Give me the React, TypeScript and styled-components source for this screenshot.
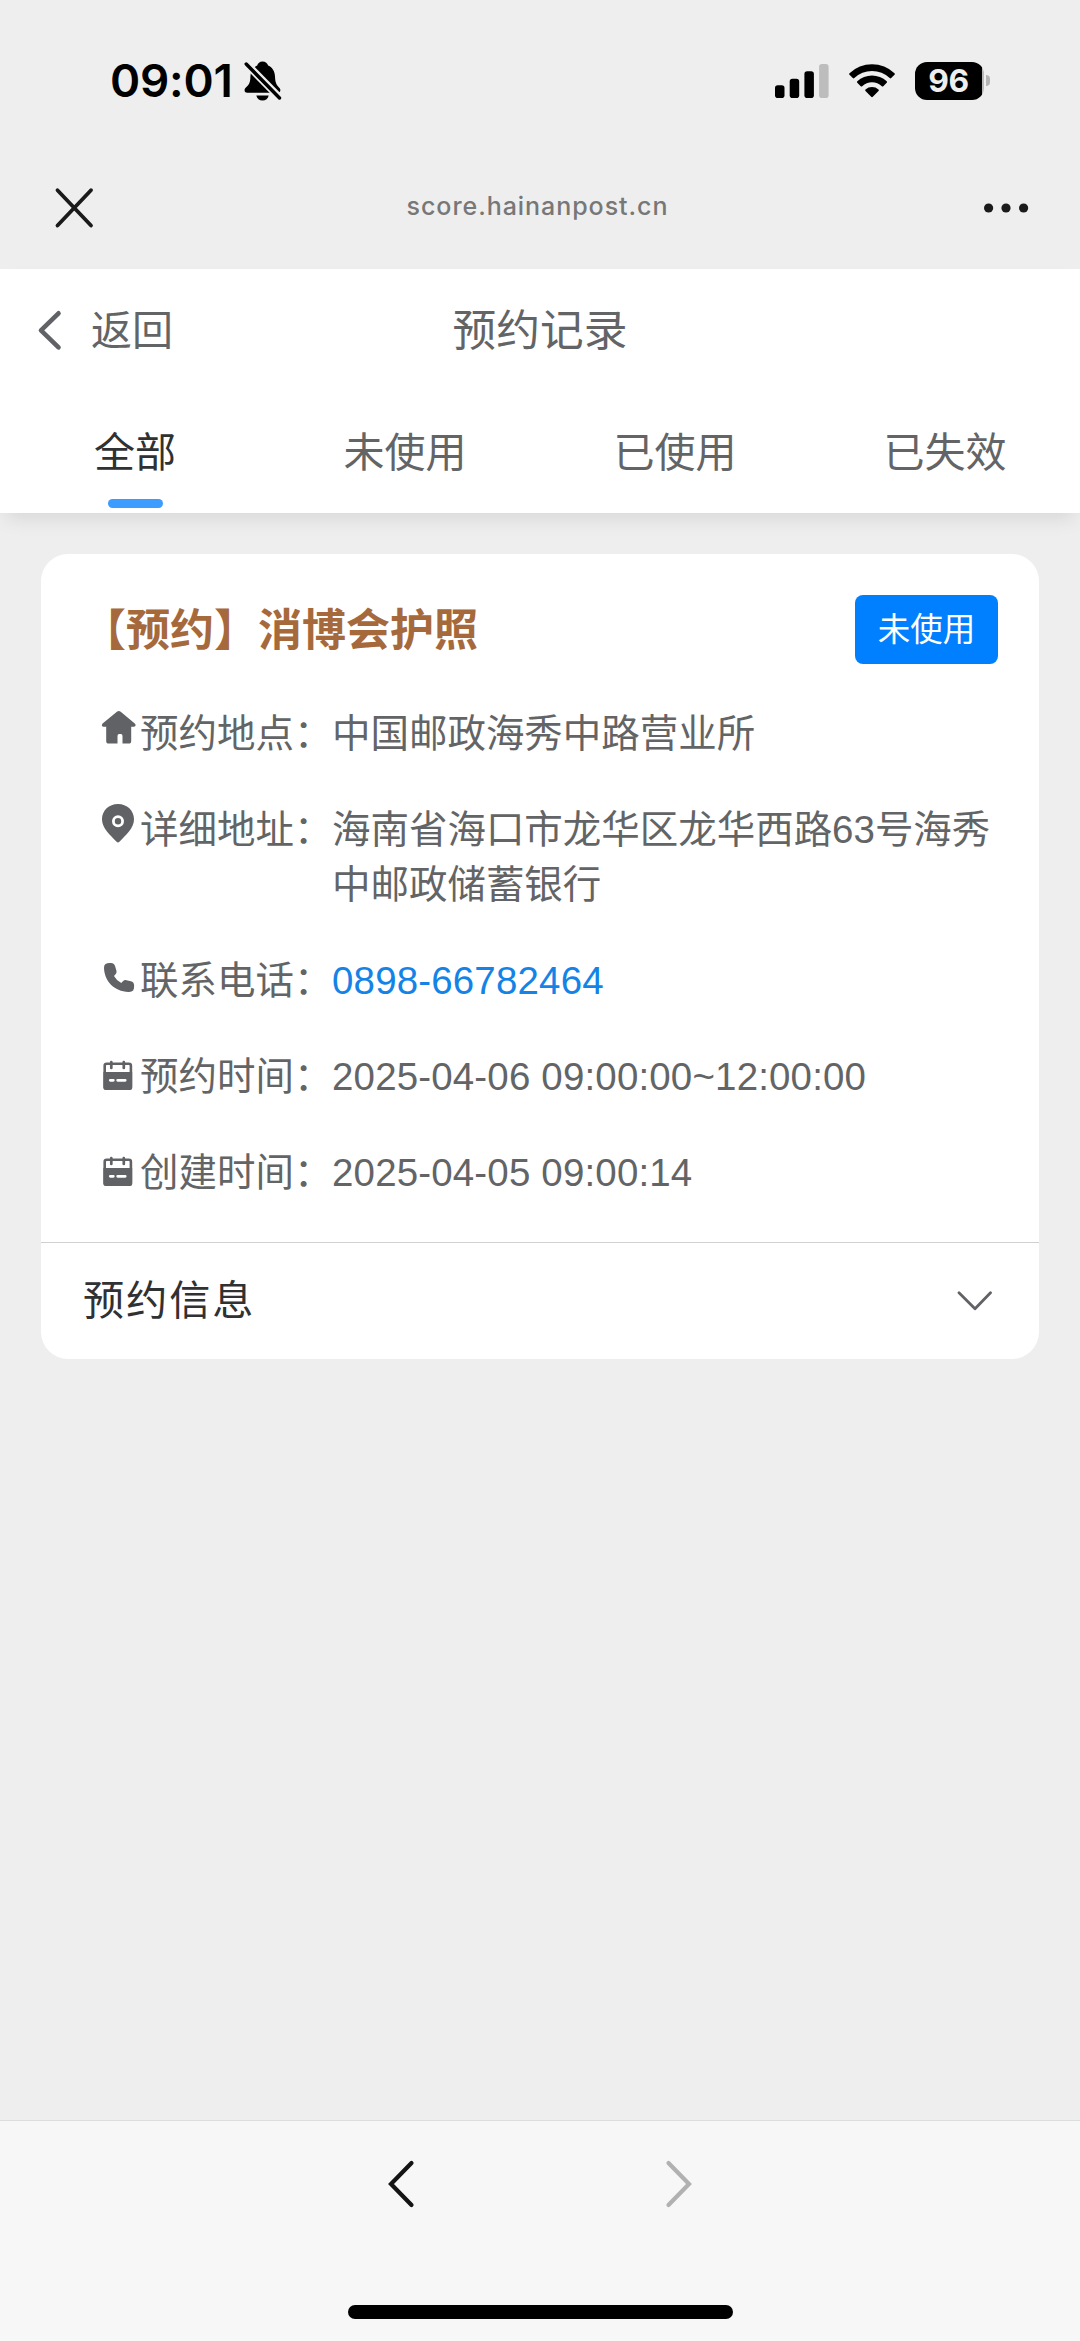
import React from "react";
import styled, { createGlobalStyle } from "styled-components";

const Global = createGlobalStyle`
  * { box-sizing: border-box; }
  body { margin: 0; background: #eeeeee; }
`;

const Screen = styled.div`
  width: 1080px;
  height: 2341px;
  display: flex;
  flex-direction: column;
  background: #eeeeee;
  color: #636466;
  font-family: "Liberation Sans", "Noto Sans CJK SC", sans-serif;
  overflow: hidden;
`;

const StatusBar = styled.div`
  height: 161px;
  flex: none;
  display: flex;
  justify-content: space-between;
  align-items: center;
  padding: 0 90px 0 110px;
  color: #000;
  font-family: Inter, sans-serif;
`;

const StatusGroup = styled.div<{ $gap: number }>`
  display: flex;
  align-items: center;
  gap: ${(p) => p.$gap}px;
`;

const Clock = styled.span`
  width: 124px;
  font-size: 45.8px;
  font-weight: 600;
  line-height: 50px;
  letter-spacing: -0.2px;
  white-space: nowrap;
`;

const Battery = styled.div`
  display: flex;
  align-items: center;
  gap: 2px;
`;

const BatteryBody = styled.div`
  width: 69px;
  height: 38px;
  border-radius: 12px;
  background: linear-gradient(90deg, #000 67px, #b9b9b9 67px);
  color: #eee;
  font-size: 31.8px;
  font-weight: 700;
  line-height: 38px;
  text-align: center;
  padding-right: 2px;
  letter-spacing: -0.5px;
`;

const BatteryTip = styled.div`
  width: 4px;
  height: 11px;
  border-radius: 0 4px 4px 0;
  background: #b4b4b4;
`;

const BrowserBar = styled.div`
  height: 108px;
  flex: none;
  display: grid;
  grid-template-columns: 1fr auto 1fr;
  align-items: center;
  padding: 0 50px 14px 53px;
`;

const Address = styled.span`
  color: #777;
  font-family: Inter, sans-serif;
  font-size: 25px;
  font-weight: 500;
  letter-spacing: 0.95px;
  line-height: 30px;
  margin: 0 8px 5px 0;
`;

const BarEnd = styled.div`
  display: flex;
  justify-content: flex-end;
`;

const Header = styled.header`
  height: 244px;
  flex: none;
  background: #fff;
  box-shadow: 0 10px 20px -6px rgba(0, 0, 0, 0.11);
`;

const NavBar = styled.div`
  height: 121px;
  display: grid;
  grid-template-columns: 1fr auto 1fr;
  align-items: center;
  padding: 0 36px;
`;

const BackButton = styled.div`
  display: flex;
  align-items: center;
  gap: 27px;
  font-size: 41px;
  line-height: 60px;
  padding-top: 2px;
`;

const NavTitle = styled.h1`
  margin: 0;
  padding-top: 3px;
  font-size: 43.7px;
  font-weight: 400;
  line-height: 60px;
`;

const Tabs = styled.div`
  height: 123px;
  display: grid;
  grid-template-columns: repeat(4, 1fr);
`;

const Tab = styled.div<{ $active?: boolean }>`
  display: flex;
  flex-direction: column;
  align-items: center;
  padding-top: 33px;
  gap: 16px;
  font-size: 41px;
  line-height: 60px;
  color: ${(p) => (p.$active ? "#303133" : "#636466")};
`;

const TabLine = styled.div`
  width: 55px;
  height: 9px;
  border-radius: 5px;
  background: #3c9cff;
`;

const Content = styled.main`
  flex: 1;
  padding: 41px;
`;

const Card = styled.section`
  height: 805px;
  border-radius: 27px;
  background: #fff;
  display: flex;
  flex-direction: column;
`;

const CardHead = styled.div`
  height: 137px;
  display: flex;
  align-items: center;
  justify-content: space-between;
  padding: 14px 41px 0;
`;

const CardTitle = styled.h2`
  margin: 0;
  padding-top: 2px;
  color: #a6693c;
  font-size: 44px;
  font-weight: 700;
  line-height: 60px;
  text-spacing-trim: space-all;
`;

const Badge = styled.span`
  width: 143px;
  height: 69px;
  border-radius: 8px;
  background: #0080ff;
  color: #fff;
  font-size: 32.5px;
  line-height: 70px;
  text-align: center;
`;

const Details = styled.div`
  flex: 1;
  display: flex;
  flex-direction: column;
  gap: 41px;
  padding: 15px 41px 0 59px;
  font-size: 38.47px;
  line-height: 55px;
`;

const Detail = styled.div`
  display: flex;
  align-items: flex-start;
`;

const IconBox = styled.span`
  width: 40px;
  height: 55px;
  padding-left: 1px;
  flex: none;
  display: flex;
`;

const Label = styled.span`
  width: 192px;
  flex: none;
  white-space: nowrap;
`;

const Value = styled.span<{ $link?: boolean; $numeric?: boolean }>`
  flex: 1;
  letter-spacing: ${(p) => (p.$numeric ? "0.17px" : "0")};
  color: ${(p) => (p.$link ? "#1583e6" : "inherit")};
`;

const Collapse = styled.div`
  height: 117px;
  display: flex;
  align-items: center;
  justify-content: space-between;
  border-top: 1px solid #d0d1d3;
  padding: 0 46px 0 42px;
  color: #303133;
  font-size: 41.2px;
`;

const CollapseTitle = styled.span`
  line-height: 60px;
  padding-bottom: 1px;
  letter-spacing: 1.9px;
`;

const Toolbar = styled.footer`
  height: 221px;
  flex: none;
  display: flex;
  flex-direction: column;
  align-items: center;
  justify-content: space-between;
  border-top: 1px solid #dcdddd;
  background: #f7f7f7;
  padding: 38px 0 22px;
`;

const ToolbarButtons = styled.div`
  display: flex;
  gap: 248px;
`;

const HomeBar = styled.div`
  width: 385px;
  height: 14px;
  border-radius: 7px;
  background: #000;
`;

const BellOff = () => (
  <svg width="38" height="40" viewBox="0 0 38 40">
    <path
      d="M18.5 0.5c3 0 5 1.700 5.600 4c4.500 2 6.700 6 6.900 11c.2 6 1.500 8.500 4 11c1.300 1.300 1.500 2 1.300 3.300c-.2 1.200-1 2-2.300 2H3.300c-1.600 0-2.600-.8-2.700-2.200c-.1-1.400.5-2.300 1.800-3.500c3-2.800 3.900-5 4-10.600c.1-5.500 2.500-9 6.800-11c.6-2.300 2.500-4 5.300-4z"
      fill="#000"
    />
    <path d="M12.300 34.500h12.400c-.6 3-3 5-6.200 5s-5.600-2-6.200-5z" fill="#000" />
    <path d="M1 1.500L37 38" stroke="#eee" strokeWidth="7.500" />
    <path d="M2.200 3L35.500 37" stroke="#000" strokeWidth="3.400" strokeLinecap="round" />
  </svg>
);

const Signal = () => (
  <svg width="54" height="34" viewBox="0 0 54 34">
    <rect x="0" y="21.300" width="9.500" height="12.700" rx="2.800" />
    <rect x="14.700" y="14.700" width="9.500" height="19.300" rx="2.800" />
    <rect x="29.400" y="7.300" width="9.500" height="26.700" rx="2.800" />
    <rect x="44.100" y="0" width="9.500" height="34" rx="2.800" fill="#bdbdbd" />
  </svg>
);

const Wifi = () => (
  <svg width="46" height="34" viewBox="0 0 46 34">
    <path d="M0.500 9.300a32.500 32.500 0 0 1 45 0c.5.500.5 1 0 1.500l-3.300 3.300c-.5.500-1 .5-1.500 0a25.500 25.500 0 0 0-35.400 0c-.5.500-1 .5-1.500 0l-3.300-3.300c-.5-.5-.5-1 0-1.500z" />
    <path d="M8.300 17.300a21.300 21.300 0 0 1 29.400 0c.5.500.5 1 0 1.500l-3.400 3.400c-.5.500-1 .5-1.500 0a14.200 14.200 0 0 0-19.600 0c-.5.500-1 .5-1.500 0l-3.400-3.400c-.5-.5-.5-1 0-1.500z" />
    <path d="M16.500 25.400a9.800 9.800 0 0 1 13 0c.5.500.5 1 0 1.500l-5.700 5.900c-.5.500-1.100.5-1.600 0l-5.700-5.900c-.5-.5-.5-1 0-1.500z" />
  </svg>
);

const Close = () => (
  <svg width="42" height="42" viewBox="0 0 42 42" fill="none" stroke="#1a1a1a" strokeWidth="3.800" strokeLinecap="round">
    <path d="M4.500 3.200L38 38.500M38 3.200L4.500 38.500" />
  </svg>
);

const More = () => (
  <svg width="46" height="12" viewBox="0 0 46 12" fill="#1a1a1a">
    <circle cx="4.600" cy="6" r="4.600" />
    <circle cx="22" cy="6" r="4.600" />
    <circle cx="39.600" cy="6" r="4.600" />
  </svg>
);

const NavChevron = () => (
  <svg width="28" height="44" viewBox="0 0 28 44" fill="none" stroke="#606266" strokeWidth="4.600" strokeLinecap="round" strokeLinejoin="round">
    <path d="M22.500 4.300L5 21.300L22.500 38.300" />
  </svg>
);

const DownChevron = () => (
  <svg width="36" height="20" viewBox="0 0 36 20" fill="none" stroke="#606266" strokeWidth="2.800" strokeLinecap="round" strokeLinejoin="round">
    <path d="M2 1.800L18 17.700L33.500 1.800" />
  </svg>
);

const ToolChevron = ({ forward }: { forward?: boolean }) => (
  <svg width="30" height="50" viewBox="0 0 30 50" fill="none" stroke={forward ? "#b1b1b1" : "#141414"} strokeWidth="4.200" strokeLinecap="round">
    <path d={forward ? "M4.500 4L25 25L4.500 46" : "M25.500 4L5 25L25.500 46"} />
  </svg>
);

const House = () => (
  <svg width="36" height="44" viewBox="0 1 36 44" fill="#606266">
    <path d="M15.900 6.700q1.900-1.500 3.800 0L33.800 18.600q1.300 1.300.6 2.300t-2.200.8h-2V36q0 2.600-2.500 2.600h-6.200V31q0-1.900-1.600-1.900h-1.800q-1.600 0-1.600 1.900v7.600H7.700q-2.500 0-2.500-2.600V21.700h-2q-1.700.2-2.200-.8t.6-2.300z" />
  </svg>
);

const Pin = () => (
  <svg width="36" height="44" viewBox="0 0 36 44">
    <path d="M17 2C8 2 1 8.500 1 17.300C1 26 9 33 15.600 39.800q1.400 1.300 2.800 0C25 33 33 26 33 17.300C33 8.500 26 2 17 2z" fill="#606266" />
    <circle cx="17" cy="19.300" r="4.600" fill="none" stroke="#fff" strokeWidth="2.800" />
  </svg>
);

const Phone = () => (
  <svg width="36" height="44" viewBox="0 0 36 44" fill="#606266">
    <path d="M4.500 11q2-1.300 5.500-1q3.400 .2 4.200 3.500l1.300 4.500q.4 2-1.200 3.500l-1.300 1.500q2.500 4.700 7.300 6.900l1.600-1.600q1.500-1.500 3.500-1.100l4.500 1q3 .8 3.200 3.700q.3 4-.9 5.600q-1.300 1.500-4.600 1.400C13 38.500 3.500 28 3 15q-.100-2.900 1.500-4z" />
  </svg>
);

const Calendar = () => (
  <svg width="36" height="44" viewBox="0 -2 36 44">
    <rect x="3.700" y="12.800" width="26.200" height="25" rx="2" fill="none" stroke="#606266" strokeWidth="2.600" />
    <path d="M2.400 21h28.800v15.600q0 2.500-2.500 2.500H4.900q-2.500 0-2.500-2.500z" fill="#606266" />
    <path d="M10.300 11v6M22.800 11v6" stroke="#606266" strokeWidth="2.700" strokeLinecap="round" />
    <path d="M9.300 29.300h3M16.700 29.300h7.500" stroke="#fff" strokeWidth="2.800" strokeLinecap="round" />
  </svg>
);

const details = [
  { icon: <House />, label: "预约地点：", value: "中国邮政海秀中路营业所" },
  { icon: <Pin />, label: "详细地址：", value: "海南省海口市龙华区龙华西路63号海秀中邮政储蓄银行" },
  { icon: <Phone />, label: "联系电话：", value: "0898-66782464", link: true, numeric: true },
  { icon: <Calendar />, label: "预约时间：", value: "2025-04-06 09:00:00~12:00:00", numeric: true },
  { icon: <Calendar />, label: "创建时间：", value: "2025-04-05 09:00:14", numeric: true },
];

const tabs = ["全部", "未使用", "已使用", "已失效"];

export default function App() {
  return (
    <Screen lang="zh-CN">
      <Global />
      <StatusBar>
        <StatusGroup $gap={10}>
          <Clock>09:01</Clock>
          <BellOff />
        </StatusGroup>
        <StatusGroup $gap={20}>
          <Signal />
          <Wifi />
          <Battery>
            <BatteryBody>96</BatteryBody>
            <BatteryTip />
          </Battery>
        </StatusGroup>
      </StatusBar>
      <BrowserBar>
        <Close />
        <Address>score.hainanpost.cn</Address>
        <BarEnd>
          <More />
        </BarEnd>
      </BrowserBar>
      <Header>
        <NavBar>
          <BackButton>
            <NavChevron />
            返回
          </BackButton>
          <NavTitle>预约记录</NavTitle>
        </NavBar>
        <Tabs>
          {tabs.map((t, i) => (
            <Tab key={t} $active={i === 0}>
              {t}
              {i === 0 && <TabLine />}
            </Tab>
          ))}
        </Tabs>
      </Header>
      <Content>
        <Card>
          <CardHead>
            <CardTitle>【预约】消博会护照</CardTitle>
            <Badge>未使用</Badge>
          </CardHead>
          <Details>
            {details.map((d) => (
              <Detail key={d.label}>
                <IconBox>{d.icon}</IconBox>
                <Label>{d.label}</Label>
                <Value $link={d.link} $numeric={d.numeric}>
                  {d.value}
                </Value>
              </Detail>
            ))}
          </Details>
          <Collapse>
            <CollapseTitle>预约信息</CollapseTitle>
            <DownChevron />
          </Collapse>
        </Card>
      </Content>
      <Toolbar>
        <ToolbarButtons>
          <ToolChevron />
          <ToolChevron forward />
        </ToolbarButtons>
        <HomeBar />
      </Toolbar>
    </Screen>
  );
}
